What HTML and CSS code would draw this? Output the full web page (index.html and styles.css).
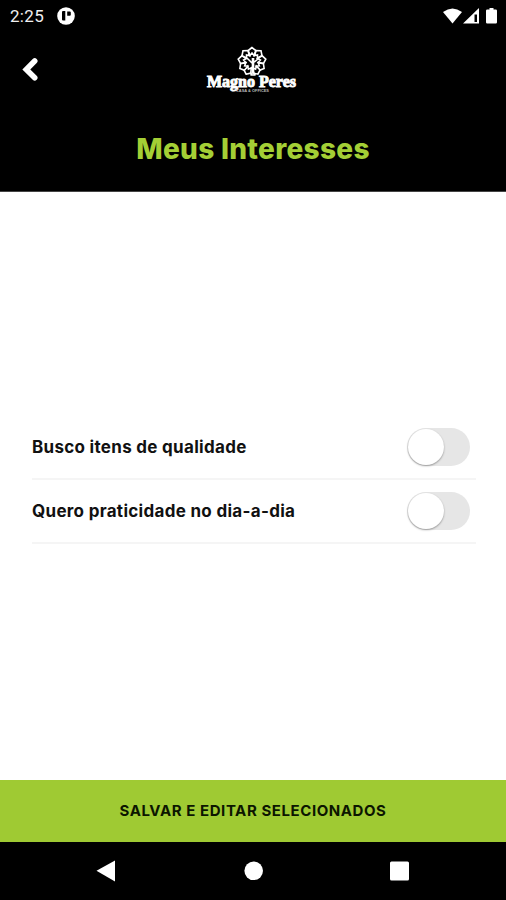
FILE: index.html
```html
<!DOCTYPE html>
<html lang="pt-BR">
<head>
<meta charset="utf-8">
<title>Meus Interesses</title>
<link rel="stylesheet" href="styles.css">
</head>
<body>
<div class="screen">
  <header class="header">
    <div class="status">
      <span class="clock">2:25</span>
      <svg class="app-icon" width="18" height="18" viewBox="0 0 18 18"><circle cx="9" cy="9" r="8.800" fill="#fff"/><path d="M5 5q0-1 1-1h2.300v9.500H6q-1 0-1-1zM10.200 4.500h2.600q1 0 1 1v2.300q0 1-1 1h-2.600z"/></svg>
      <svg class="signals" width="56" height="18" viewBox="0 0 56 18" fill="#fff"><path d="M0 4Q9.500-3 19 4L9.500 15.500z"/><path fill-rule="evenodd" d="M20 15.500L36 0v15.500zM31.500 6.500v7.500h2.500V6.500z"/><path d="M46.500 0h4v1.500h2.300q1.200 0 1.200 1.200v11.600q0 1.200-1.200 1.200h-8.600q-1.200 0-1.200-1.200V2.700q0-1.200 1.200-1.200h2.300z"/></svg>
    </div>
    <div class="brand-row">
      <svg class="back" width="18" height="24" viewBox="0 0 18 24"><path d="M12.700 4L4.300 12.500l8.400 8.300" fill="none" stroke="#fff" stroke-width="5.600" stroke-linecap="round" stroke-linejoin="miter"/></svg>
      <svg class="logo" width="92" height="48" viewBox="0 0 92 48">
        <defs><path id="leaf" d="M46 1.500L42.200 4.500L44 9.500L46 7L48 9.500L49.800 4.500z"/></defs>
        <g fill="#000" stroke="#fff" stroke-width="1.600">
          <use href="#leaf"/>
          <use href="#leaf" transform="rotate(40 46 15.500)"/>
          <use href="#leaf" transform="rotate(80 46 15.500)"/>
          <use href="#leaf" transform="rotate(120 46 15.500)"/>
          <use href="#leaf" transform="rotate(155 46 15.500)"/>
          <use href="#leaf" transform="rotate(205 46 15.500)"/>
          <use href="#leaf" transform="rotate(240 46 15.500)"/>
          <use href="#leaf" transform="rotate(280 46 15.500)"/>
          <use href="#leaf" transform="rotate(320 46 15.500)"/>
        </g>
        <path d="M46.500 12v13q0 3-2 4h5q-2-1-2-4V12M46 17l-5-5M47 17l5-4" fill="none" stroke="#fff" stroke-width="1.600"/>
        <text class="logo-name" x="1" y="41" textLength="89" lengthAdjust="spacingAndGlyphs">Magno Peres</text>
        <text class="logo-tag" x="30" y="45.500" textLength="33" lengthAdjust="spacingAndGlyphs">CASA &amp; OFFICES</text>
      </svg>
    </div>
    <h1 class="title">Meus Interesses</h1>
  </header>
  <main class="interests">
    <div class="row"><span class="label">Busco itens de qualidade</span><span class="toggle"></span></div>
    <div class="row"><span class="label">Quero praticidade no dia-a-dia</span><span class="toggle"></span></div>
  </main>
  <button class="save">SALVAR E EDITAR SELECIONADOS</button>
  <nav class="nav">
    <svg width="506" height="58" viewBox="0 0 506 58" fill="#fff"><path d="M96.500 28.800L115 18.500v21z"/><circle cx="253.700" cy="28.800" r="9.300"/><rect x="390" y="19.500" width="19" height="19" rx="1.500"/></svg>
  </nav>
</div>
</body>
</html>
```
FILE: styles.css
```css
body { margin: 0; }
.screen {
  width: 506px;
  height: 900px;
  display: flex;
  flex-direction: column;
  background: #fff;
  font-family: Inter, Roboto, sans-serif;
  color: #111;
  overflow: hidden;
}
.header { height: 192px; background: #000; flex: none; box-sizing: border-box; border-bottom: 1px solid #444; }
.status { display: flex; align-items: center; height: 32px; padding: 0 7px 0 10px; }
.clock { font: 400 17px/32px Roboto, sans-serif; color: #f0f0f0; width: 47px; letter-spacing: .3px; }
.signals { margin-left: auto; margin-top: 1px; }
.brand-row { display: grid; grid-template-columns: 184px 92px; height: 64px; padding: 14px 0 0 22px; box-sizing: border-box; }
.back { margin-top: 11px; }
.logo { overflow: visible; }
.logo-name { font: 700 16px "Liberation Serif", serif; fill: #fff; stroke: #fff; stroke-width: .9px; }
.logo-tag { font: 700 3.5px "Liberation Sans", sans-serif; fill: #bbb; }
.title { margin: 33px 0 0; text-align: center; color: #a4cf35; font-size: 28px; line-height: 40px; font-weight: 800; letter-spacing: .3px; }
.interests { flex: 1; display: flex; flex-direction: column; padding: 224px 30px 0 32px; }
.row { height: 64px; box-sizing: border-box; border-bottom: 2px solid #f5f5f5; display: flex; align-items: center; justify-content: space-between; padding-right: 6px; }
.label { font-size: 17px; font-weight: 700; line-height: 24px; white-space: nowrap; letter-spacing: .3px; }
.toggle { width: 63px; height: 38px; border-radius: 19px; background: #e6e6e6; box-sizing: border-box; padding: 1px; }
.toggle::before { content: ""; display: block; width: 36px; height: 36px; border-radius: 50%; background: #fff; box-shadow: 0 1px 2px rgba(0,0,0,.35); }
.save { height: 62px; flex: none; border: 0; padding: 0; background: #9fca33; color: #0c1600; font: 700 15px/62px Inter, Roboto, sans-serif; letter-spacing: .57px; }
.nav { height: 58px; flex: none; background: #000; }
.nav svg { display: block; }
```
